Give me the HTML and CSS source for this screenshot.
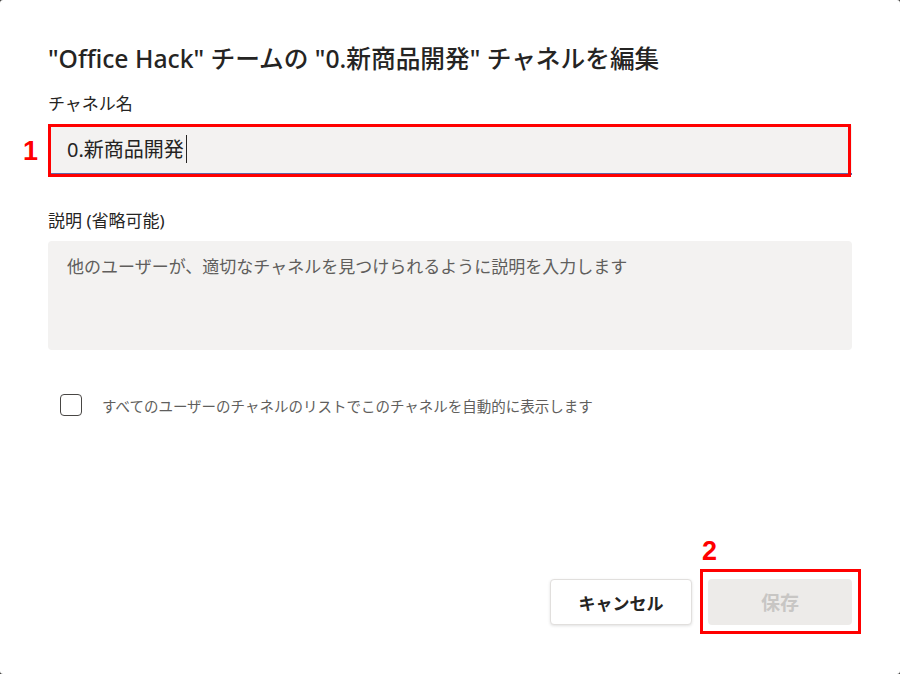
FILE: index.html
```html
<!DOCTYPE html>
<html lang="ja">
<head>
    <meta charset="UTF-8">
    <meta name="viewport" content="width=device-width, initial-scale=1.0">
    <title>チャネルを編集</title>
    <link rel="stylesheet" href="styles.css">
</head>
<body>
    <div class="dialog">
        <h1 class="title">"Office Hack" チームの "0.新商品開発" チャネルを編集</h1>

        <div class="field">
            <label class="field-label" for="channel-name">チャネル名</label>
            <div class="marked">
                <input class="text-input" id="channel-name" type="text" value="0.新商品開発">
                <span class="caret"></span>
                <span class="mark-box mark-one"></span>
                <span class="mark-num num-one">1</span>
            </div>
        </div>

        <div class="field field-desc">
            <label class="field-label" for="desc">説明 (省略可能)</label>
            <textarea class="text-area" id="desc" placeholder="他のユーザーが、適切なチャネルを見つけられるように説明を入力します"></textarea>
        </div>

        <label class="check-row">
            <span class="check-box"></span>
            <span class="check-text">すべてのユーザーのチャネルのリストでこのチャネルを自動的に表示します</span>
        </label>

        <div class="footer">
            <button class="btn btn-cancel">キャンセル</button>
            <div class="marked">
                <button class="btn btn-save" disabled>保存</button>
                <span class="mark-box mark-two"></span>
                <span class="mark-num num-two">2</span>
            </div>
        </div>
    </div>
</body>
</html>
```

FILE: styles.css
```css
html {
    background: #3b3a39;
}
body {
    margin: 0;
    font-family: "Noto Sans", "Noto Sans CJK JP", sans-serif;
    color: #252423;
}
.dialog {
    height: 674px;
    box-sizing: border-box;
    background: #fff;
    border-radius: 3px;
    padding: 43px 48px 49px;
    display: flex;
    flex-direction: column;
}
.title {
    margin: 0;
    font-size: 24.7px;
    line-height: 32px;
    font-weight: 500;
}
.field {
    display: flex;
    flex-direction: column;
    margin-top: 18px;
}
.field-desc {
    margin-top: 35px;
}
.field-label {
    font-size: 17px;
    line-height: 22px;
    color: #252423;
    margin-bottom: 9px;
}
.marked {
    position: relative;
}
.text-input {
    display: block;
    width: 100%;
    box-sizing: border-box;
    height: 51px;
    border: none;
    border-bottom: 2px solid #6264a7;
    border-radius: 3px 3px 0 0;
    background: #f3f2f1;
    padding: 0 19px;
    font-family: "Noto Sans", "Noto Sans CJK JP", sans-serif;
    font-size: 20px;
    color: #252423;
    outline: none;
}
.caret {
    position: absolute;
    left: 138px;
    top: 11px;
    width: 1px;
    height: 28px;
    background: #252423;
}
.text-area {
    display: block;
    width: 100%;
    box-sizing: border-box;
    height: 109px;
    border: none;
    border-radius: 4px;
    background: #f3f2f1;
    padding: 13px 19px;
    font-family: "Noto Sans", "Noto Sans CJK JP", sans-serif;
    font-size: 17px;
    line-height: 26px;
    resize: none;
    outline: none;
}
.text-area::placeholder {
    color: #605e5c;
}
.check-row {
    display: flex;
    align-items: center;
    margin-top: 44px;
    padding-left: 12px;
}
.check-box {
    width: 20px;
    height: 20px;
    border: 1.5px solid #484644;
    border-radius: 4px;
}
.check-text {
    margin-left: 20px;
    font-size: 14.5px;
    color: #605e5c;
}
.footer {
    margin-top: auto;
    display: flex;
    justify-content: flex-end;
    gap: 16px;
}
.btn {
    display: block;
    height: 46px;
    border-radius: 4px;
    font-family: "Noto Sans", "Noto Sans CJK JP", sans-serif;
    font-size: 17px;
    font-weight: 700;
}
.btn-cancel {
    width: 142px;
    background: #fff;
    color: #252423;
    border: 1px solid #e1dfdd;
    box-shadow: 0 1px 3px rgba(0, 0, 0, 0.12);
}
.btn-save {
    width: 144px;
    background: #edebe9;
    color: #c8c6c4;
    border: none;
    font-size: 19px;
}
.mark-box {
    position: absolute;
    border: 3px solid #ff0000;
    pointer-events: none;
}
.mark-one {
    left: 0;
    right: 1px;
    top: 0;
    bottom: -2px;
}
.mark-two {
    left: -8px;
    right: -9px;
    top: -10px;
    bottom: -9px;
}
.mark-num {
    position: absolute;
    font-family: "Liberation Sans", Arial, sans-serif;
    font-weight: 700;
    font-size: 27px;
    line-height: 1;
    color: #ff0000;
}
.num-one {
    left: -25px;
    top: 14px;
}
.num-two {
    left: -6px;
    top: -41px;
}
```
